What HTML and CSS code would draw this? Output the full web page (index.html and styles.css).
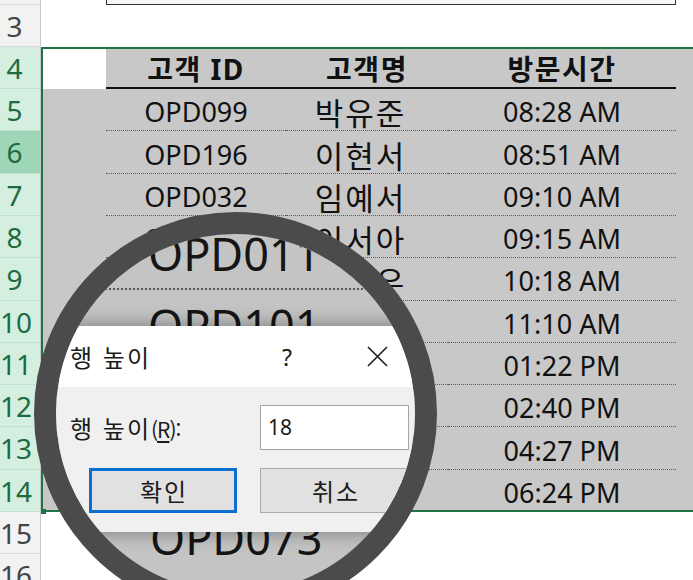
FILE: index.html
```html
<!DOCTYPE html>
<html lang="ko">
<head>
    <meta charset="UTF-8">
    <meta name="viewport" content="width=device-width, initial-scale=1.0">
    <title>행 높이</title>
    <link rel="stylesheet" href="styles.css">
</head>
<body>
<div class="page">

    <div class="sheet">
        <div class="heads">
            <div class="rh stub"></div>
            <div class="rh">3</div>
            <div class="rh on">4</div>
            <div class="rh on">5</div>
            <div class="rh on active">6</div>
            <div class="rh on">7</div>
            <div class="rh on">8</div>
            <div class="rh on">9</div>
            <div class="rh on">10</div>
            <div class="rh on">11</div>
            <div class="rh on">12</div>
            <div class="rh on">13</div>
            <div class="rh on">14</div>
            <div class="rh">15</div>
            <div class="rh">16</div>
        </div>

        <div class="cells">
            <div class="r2"><div class="box"></div></div>
            <div class="row"></div>

            <div class="sel">
                <div class="row head">
                    <div class="pad"></div>
                    <div class="c c1">고객 ID</div>
                    <div class="c c2">고객명</div>
                    <div class="c c3">방문시간</div>
                    <div class="rest"></div>
                </div>
                <div class="row data">
                    <div class="pad"></div>
                    <div class="c c1">OPD099</div>
                    <div class="c c2">박유준</div>
                    <div class="c c3">08:28 AM</div>
                    <div class="rest"></div>
                </div>
                <div class="row data">
                    <div class="pad"></div>
                    <div class="c c1">OPD196</div>
                    <div class="c c2">이현서</div>
                    <div class="c c3">08:51 AM</div>
                    <div class="rest"></div>
                </div>
                <div class="row data">
                    <div class="pad"></div>
                    <div class="c c1">OPD032</div>
                    <div class="c c2">임예서</div>
                    <div class="c c3">09:10 AM</div>
                    <div class="rest"></div>
                </div>
                <div class="row data">
                    <div class="pad"></div>
                    <div class="c c1">OPD011</div>
                    <div class="c c2">이서아</div>
                    <div class="c c3">09:15 AM</div>
                    <div class="rest"></div>
                </div>
                <div class="row data">
                    <div class="pad"></div>
                    <div class="c c1">OPD101</div>
                    <div class="c c2">김민우</div>
                    <div class="c c3">10:18 AM</div>
                    <div class="rest"></div>
                </div>
                <div class="row data">
                    <div class="pad"></div>
                    <div class="c c1">OPD154</div>
                    <div class="c c2">최지호</div>
                    <div class="c c3">11:10 AM</div>
                    <div class="rest"></div>
                </div>
                <div class="row data">
                    <div class="pad"></div>
                    <div class="c c1">OPD087</div>
                    <div class="c c2">정하윤</div>
                    <div class="c c3">01:22 PM</div>
                    <div class="rest"></div>
                </div>
                <div class="row data">
                    <div class="pad"></div>
                    <div class="c c1">OPD045</div>
                    <div class="c c2">강도윤</div>
                    <div class="c c3">02:40 PM</div>
                    <div class="rest"></div>
                </div>
                <div class="row data">
                    <div class="pad"></div>
                    <div class="c c1">OPD120</div>
                    <div class="c c2">윤서연</div>
                    <div class="c c3">04:27 PM</div>
                    <div class="rest"></div>
                </div>
                <div class="row data last">
                    <div class="pad"></div>
                    <div class="c c1">OPD073</div>
                    <div class="c c2">한지민</div>
                    <div class="c c3">06:24 PM</div>
                    <div class="rest"></div>
                </div>
            </div>

            <div class="row"></div>
            <div class="row"></div>
        </div>
    </div>

    <!-- magnifier over the sheet -->
    <div class="lens">
        <div class="zoom-top">
            <div class="zrow first">OPD011</div>
            <div class="zrow">OPD101</div>
        </div>

        <div class="dlg">
            <div class="dlg-title">
                <span class="t">행 높이</span>
                <span class="q">?</span>
                <svg class="x" width="21" height="21" viewBox="0 0 21 21">
                    <path d="M1 1 L20 20 M20 1 L1 20" stroke="#222" stroke-width="1.7" fill="none"/>
                </svg>
            </div>
            <div class="dlg-body">
                <div class="field">
                    <span class="lbl">행 높이<span class="acc">(<u>R</u>):</span></span>
                    <div class="input">18</div>
                </div>
                <div class="btns">
                    <div class="btn ok">확인</div>
                    <div class="btn">취소</div>
                </div>
            </div>
        </div>

        <div class="zoom-bottom">
            <div class="zrow low">OPD073</div>
        </div>
    </div>

</div>
</body>
</html>
```

FILE: styles.css
```css
html, body {
    margin: 0;
    overflow: hidden;
}
body {
    background-color: white;
    font-family: "Noto Sans", "Noto Sans CJK KR", sans-serif;
    color: #111;
}
.page {
    width: 693px;
    height: 580px;
    overflow: hidden;
    position: relative;
}
.sheet {
    display: grid;
    grid-template-columns: 41px 1fr;
}

/* row headers */
.rh {
    height: 42.3px;
    box-sizing: border-box;
    border-right: 1px solid #c9c9c9;
    border-bottom: 1px solid #dadada;
    background-color: #f2f2f2;
    color: #444;
    font-size: 28px;
    line-height: 42px;
    text-align: center;
    padding-right: 11px;
}
.rh.stub {
    height: 4.5px;
}
.rh.on {
    background-color: #d4efe0;
    color: #1f6b41;
    border-bottom-color: #bfe0cd;
}
.rh.active {
    background-color: #a0d6b8;
}

/* cells */
.r2 {
    height: 4.5px;
}
.r2 .box {
    margin-left: 65px;
    width: 570px;
    height: 100%;
    box-sizing: border-box;
    border: 1.5px solid #333;
    border-top: none;
    background-color: #f6f6f6;
}
.row {
    height: 42.3px;
    display: flex;
}
.sel {
    position: relative;
}
.sel::after {
    content: "";
    position: absolute;
    top: 0;
    left: 0;
    right: -4px;
    bottom: 0;
    border: 2px solid #217346;
    pointer-events: none;
}
.sel::before {
    content: "";
    position: absolute;
    left: 0;
    bottom: -2px;
    width: 5px;
    height: 5px;
    background-color: #217346;
    z-index: 2;
}
.pad {
    width: 65px;
}
.rest {
    flex: 1;
}
.head .c,
.head .rest,
.data {
    background-color: #c8c8c8;
}
.c {
    display: flex;
    align-items: center;
    justify-content: center;
    box-sizing: border-box;
    padding-top: 4px;
    white-space: nowrap;
}
.c1 { width: 180px; }
.c2 { width: 162px; }
.c3 { width: 228px; }

.head .c {
    font-size: 28px;
    font-weight: bold;
    letter-spacing: 1.5px;
    border-bottom: 2px solid #111;
    padding-top: 2px;
}
.data .c {
    font-size: 27px;
    border-bottom: 1px dotted #5a5a5a;
}
.data .c2 {
    font-size: 31px;
    letter-spacing: 2px;
    padding-right: 13px;
}
.data.last .c {
    border-bottom: none;
}

/* magnifier */
.lens {
    position: absolute;
    left: 34px;
    top: 212px;
    width: 403px;
    height: 403px;
    box-sizing: border-box;
    border: 22px solid #4b4b4b;
    border-radius: 50%;
    overflow: hidden;
    background-color: #c4c4c4;
    z-index: 5;
}
.zoom-top {
    height: 92px;
    overflow: hidden;
}
.zrow {
    height: 72px;
    box-sizing: border-box;
    border-bottom: 2px dotted #555;
    font-size: 45px;
    line-height: 68px;
    padding-top: 2px;
    padding-left: 92px;
    color: #151515;
    white-space: nowrap;
}
.zrow.first {
    margin-top: -16px;
}
.zrow.low {
    margin-top: -30px;
    padding-left: 94px;
    border-bottom: none;
}

.dlg {
    position: relative;
    z-index: 1;
    box-shadow: 0 0 18px rgba(0, 0, 0, 0.4);
    font-family: "Noto Sans CJK KR", "Noto Sans", sans-serif;
    font-size: 24px;
    color: #1b1b1b;
}
.dlg-title {
    height: 61px;
    background-color: white;
    display: flex;
    align-items: center;
    padding: 0 27px 0 14px;
}
.dlg-title .t {
    flex: 1;
    letter-spacing: 2px;
}
.dlg-title .q {
    margin-right: 75px;
    font-family: "Noto Sans", sans-serif;
    font-size: 23px;
}
.dlg-body {
    height: 145px;
    box-sizing: border-box;
    background-color: #f0f0f0;
    padding: 18px 0 0 14px;
}
.field {
    display: flex;
    align-items: center;
    height: 45px;
}
.lbl {
    width: 190px;
    letter-spacing: 2px;
}
.lbl .acc {
    letter-spacing: -1px;
    font-size: 21px;
}
.lbl u {
    text-underline-offset: 3px;
}
.input {
    width: 149px;
    height: 45px;
    box-sizing: border-box;
    border: 1.5px solid #a6a6a6;
    background-color: white;
    padding-left: 7px;
    font-family: "Noto Sans", sans-serif;
    font-size: 21px;
    line-height: 42px;
}
.btns {
    display: flex;
    gap: 23px;
    margin: 18px 0 0 19px;
}
.btn {
    width: 148px;
    height: 45px;
    box-sizing: border-box;
    background-color: #e1e1e1;
    border: 1.5px solid #adadad;
    display: flex;
    align-items: center;
    justify-content: center;
    letter-spacing: 2px;
    padding-left: 2px;
}
.btn + .btn {
    width: 150px;
}
.btn.ok {
    border: 3px solid #0b70d0;
}
```
